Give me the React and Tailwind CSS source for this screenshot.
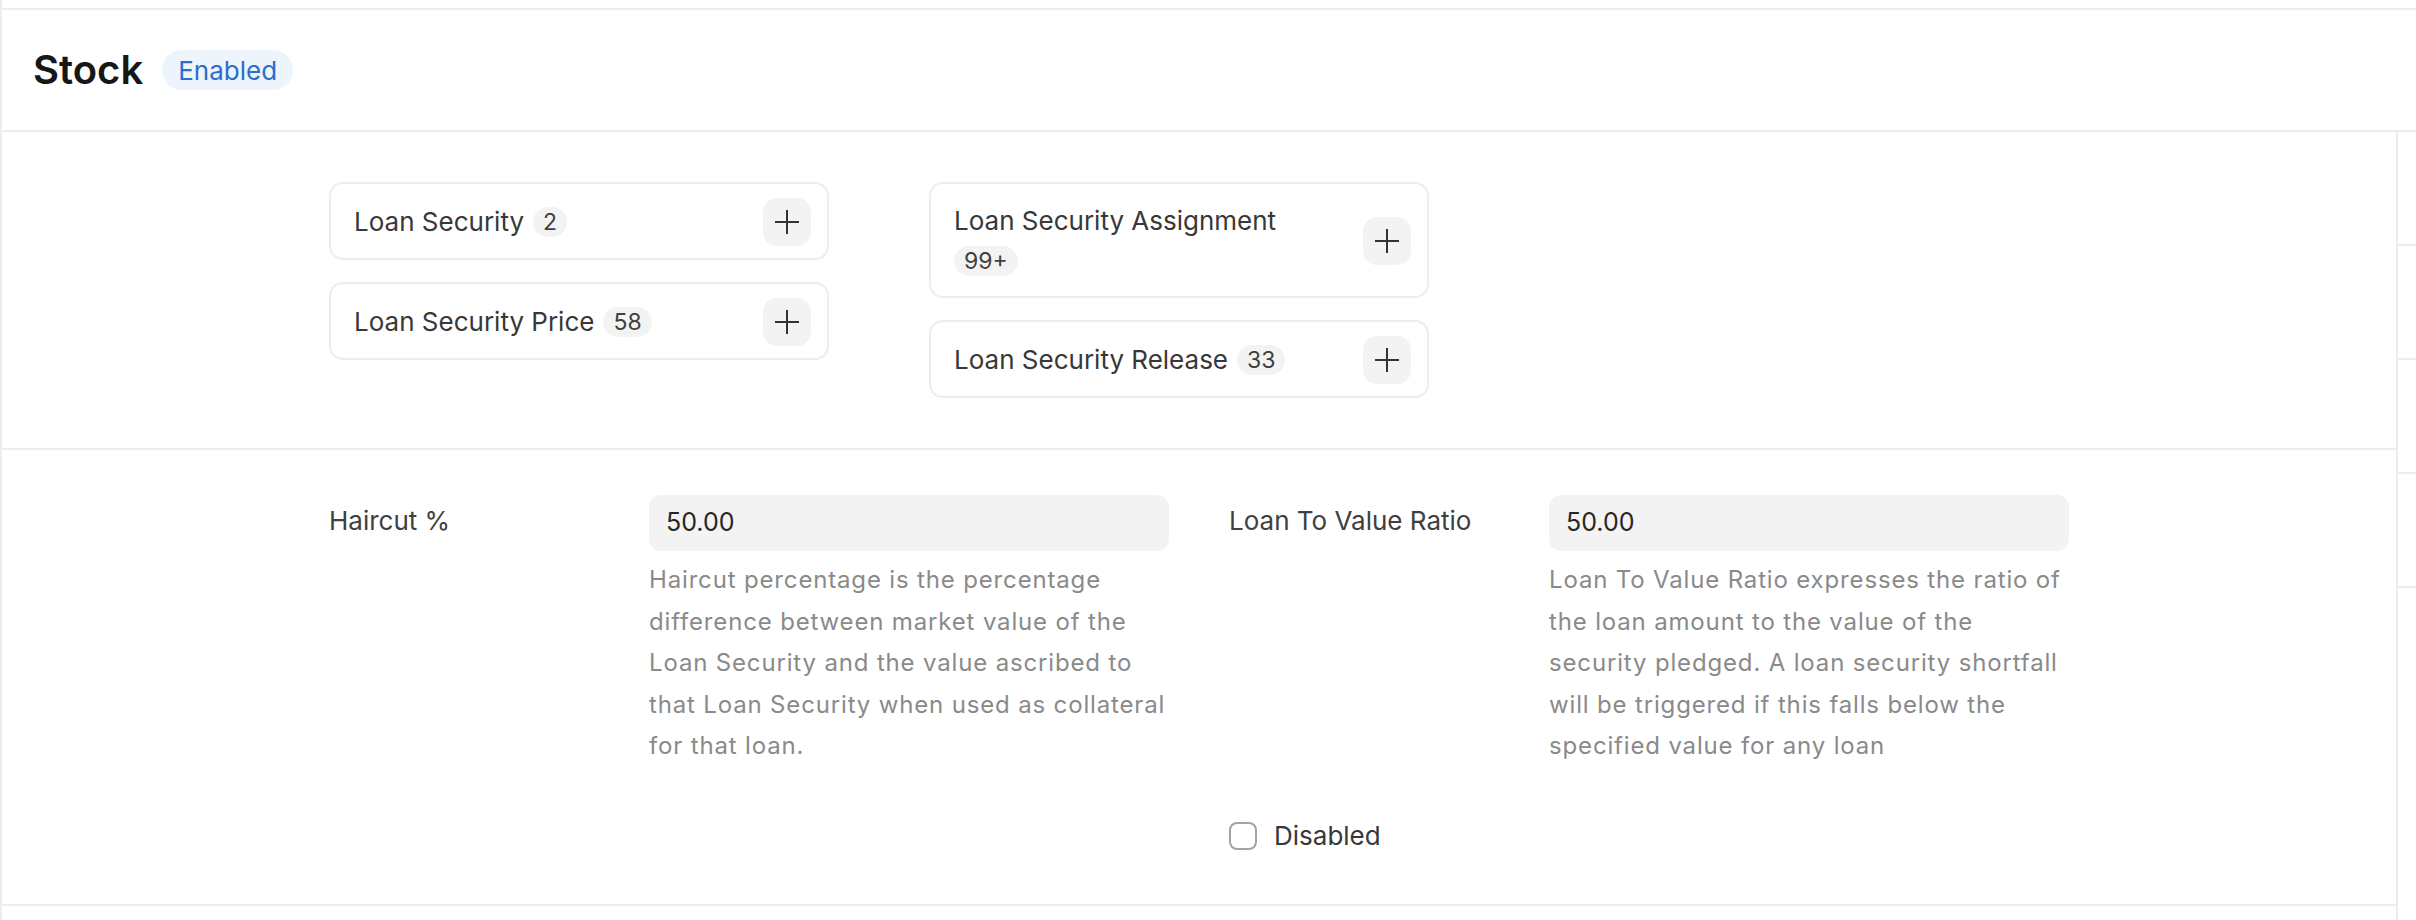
import React from 'react';

const links = [
  [
    { name: 'Loan Security', count: '2' },
    { name: 'Loan Security Price', count: '58' },
  ],
  [
    { name: 'Loan Security Assignment', count: '99+' },
    { name: 'Loan Security Release', count: '33' },
  ],
];

const PlusIcon = () => (
  <svg width="24" height="24" viewBox="0 0 24 24" fill="none" stroke="#333333" strokeWidth="2" strokeLinecap="square">
    <path d="M12 1v22M1 12h22" />
  </svg>
);

const LinkCard = ({ name, count }) => (
  <div className="flex items-center gap-[40px] rounded-[14px] border-2 border-[#ededed] bg-white pt-[14px] pb-[12px] pl-[23px] pr-[16px]">
    <div className="flex flex-1 flex-wrap items-center gap-x-[9px] gap-y-[10px] py-[8px]">
      <span className="text-[26px] leading-[30px] text-[#383838]">{name}</span>
      <span className="flex h-[30px] items-center rounded-full bg-[#f3f3f3] px-[10px] text-[23px] text-[#404040]">
        {count}
      </span>
    </div>
    <button className="flex h-[48px] w-[48px] shrink-0 items-center justify-center rounded-[14px] bg-[#f3f3f3]">
      <PlusIcon />
    </button>
  </div>
);

const Field = ({ label, value, description }) => (
  <div className="flex">
    <div className="w-[320px] shrink-0 pt-[10px] text-[26px] leading-[32px] text-[#404040]">{label}</div>
    <div className="w-[520px]">
      <div className="flex h-[56px] items-center rounded-[12px] bg-[#f3f3f3] px-[17px] text-[25px] text-[#262626]">
        {value}
      </div>
      <p className="mt-[8px] text-[24px] leading-[41.6px] tracking-[0.035em] text-[#8a8a8a]">{description}</p>
    </div>
  </div>
);

const App = () => {
  return (
    <div className="flex h-[920px] w-full flex-col overflow-hidden border-l-2 border-[#ededed] bg-white font-['Inter',sans-serif]">
      <div className="h-[8px] shrink-0" />
      <div className="flex h-[124px] shrink-0 items-center gap-[19px] border-y-2 border-[#ededed] pl-[31px]">
        <h1 className="text-[40px] font-semibold text-[#171717]">Stock</h1>
        <span className="flex h-[40px] items-center rounded-full bg-[#edf4fc] px-[16px] text-[26px] text-[#2d6ccf]">
          Enabled
        </span>
      </div>

      <div className="flex flex-1">
        <main className="flex-1 border-r-2 border-[#ededed]">
          <section className="h-[318px] border-b-2 border-[#ededed] pt-[50px]">
            <div className="mx-auto flex w-[1740px] gap-[100px]">
              {links.map((col, i) => (
                <div key={i} className="flex w-[500px] flex-col gap-[22px]">
                  {col.map((l) => (
                    <LinkCard key={l.name} {...l} />
                  ))}
                </div>
              ))}
            </div>
          </section>

          <section className="h-[456px] border-b-2 border-[#ededed] pt-[45px]">
            <div className="mx-auto flex w-[1740px] gap-[60px]">
              <div className="w-[840px]">
                <Field
                  label="Haircut %"
                  value="50.00"
                  description="Haircut percentage is the percentage difference between market value of the Loan Security and the value ascribed to that Loan Security when used as collateral for that loan."
                />
              </div>
              <div className="w-[840px]">
                <Field
                  label="Loan To Value Ratio"
                  value="50.00"
                  description="Loan To Value Ratio expresses the ratio of the loan amount to the value of the security pledged. A loan security shortfall will be triggered if this falls below the specified value for any loan"
                />
                <label className="mt-[52px] flex items-center gap-[17px]">
                  <span className="h-[28px] w-[28px] rounded-[8px] border-2 border-[#a3a3a3] bg-white" />
                  <span className="text-[26px] leading-[34px] text-[#383838]">Disabled</span>
                </label>
              </div>
            </div>
          </section>
        </main>

        <aside className="w-[18px] shrink-0">
          <div className="h-[114px] border-b-2 border-[#ededed]" />
          <div className="h-[114px] border-b-2 border-[#ededed]" />
          <div className="h-[114px] border-b-2 border-[#ededed]" />
          <div className="h-[114px] border-b-2 border-[#ededed]" />
        </aside>
      </div>
    </div>
  );
};

export default App;
